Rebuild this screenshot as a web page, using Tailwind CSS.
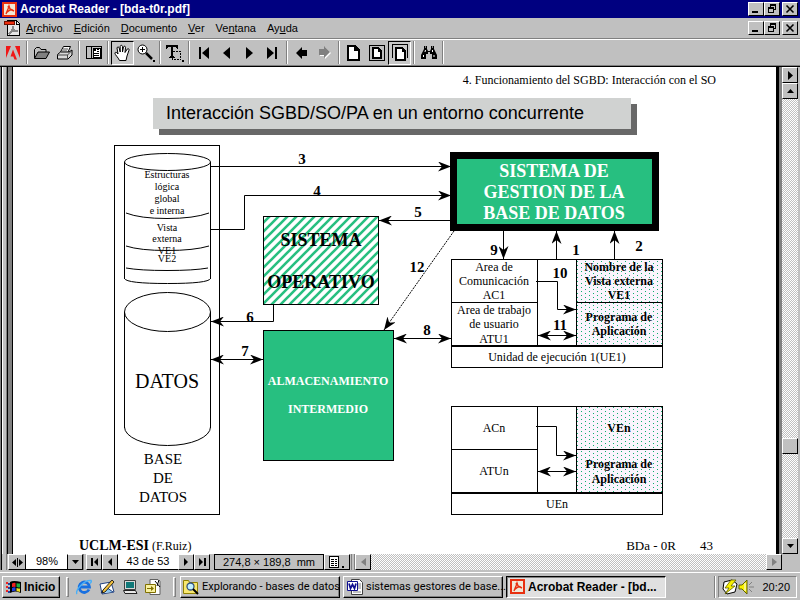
<!DOCTYPE html>
<html lang="es">
<head>
<meta charset="utf-8">
<title>Acrobat Reader - [bda-t0r.pdf]</title>
<script src="https://cdn.jsdelivr.net/npm/@tailwindcss/browser@4"></script>
</head>
<body class="flex h-screen flex-col overflow-hidden bg-[#c0c0c0] font-['Liberation_Sans',Arial,sans-serif] text-[11px] leading-4 text-black">

<!-- Title bar -->
<header class="flex h-[18px] shrink-0 items-center bg-[#000080] pr-[2px] pl-[2px] text-white">
  <svg class="mr-[3px] size-[15px]" viewBox="0 0 15 15"><rect width="15" height="15" fill="#fff"/><rect x="1" y="1" width="13" height="13" fill="#f0e8d8" stroke="#e83010" stroke-width="2"/><path d="M4 12 6 7 7 4 8 7 12 9M4 11 8 8 11 8M6 4 7 6" fill="none" stroke="#e83010" stroke-width="1.4"/></svg>
  <h1 class="flex-1 text-[12px] font-bold whitespace-nowrap">Acrobat Reader - [bda-t0r.pdf]</h1>
  <div class="flex">
    <button aria-label="Minimizar" class="flex h-[14px] w-4 border border-t-white border-r-black border-b-black border-l-white bg-[#c0c0c0]"><svg class="size-full" viewBox="0 0 14 12" shape-rendering="crispEdges"><path d="M3 8h6v2H3z"/></svg></button>
    <button aria-label="Restaurar" class="mr-[2px] flex h-[14px] w-4 border border-t-white border-r-black border-b-black border-l-white bg-[#c0c0c0]"><svg class="size-full" viewBox="0 0 14 12" shape-rendering="crispEdges"><path d="M5 1h6v6H9V6h1V3H6v1H5zM3 4h6v6H3zM4 6v3h4V6z" fill-rule="evenodd"/></svg></button>
    <button aria-label="Cerrar" class="flex h-[14px] w-4 border border-t-white border-r-black border-b-black border-l-white bg-[#c0c0c0]"><svg class="size-full" viewBox="0 0 14 12"><path d="M3.5 2.5l7 7m0-7l-7 7" stroke="#000" stroke-width="1.6"/></svg></button>
  </div>
</header>

<!-- Menu bar -->
<nav class="flex h-[21px] shrink-0 items-center border-b border-[#808080] pr-[2px] pl-1">
  <svg class="mr-[6px] size-4" viewBox="0 0 16 16" shape-rendering="crispEdges"><path d="M3 .5h9.500l3 3v12H3z" fill="#e8e8e8" stroke="#000"/><path d="M12 1v3h3" fill="none" stroke="#000"/><path d="M5 14l3-4 1-4 1 4 4 1-5 0z" fill="none" stroke="#888" stroke-width="1.500"/><path d="M.5 1.500h10v3H.5z" fill="#f03010" stroke="#701000"/></svg>
  <div class="flex flex-1 gap-[11px]">
    <button><u>A</u>rchivo</button><button><u>E</u>dición</button><button><u>D</u>ocumento</button><button><u>V</u>er</button><button>Ve<u>n</u>tana</button><button>Ay<u>u</u>da</button>
  </div>
  <div class="flex">
    <button aria-label="Minimizar documento" class="flex h-[14px] w-4 border border-t-white border-r-black border-b-black border-l-white"><svg class="size-full" viewBox="0 0 14 12" shape-rendering="crispEdges"><path d="M3 8h6v2H3z"/></svg></button>
    <button aria-label="Restaurar documento" class="mr-[2px] flex h-[14px] w-4 border border-t-white border-r-black border-b-black border-l-white"><svg class="size-full" viewBox="0 0 14 12" shape-rendering="crispEdges"><path d="M5 1h6v6H9V6h1V3H6v1H5zM3 4h6v6H3zM4 6v3h4V6z" fill-rule="evenodd"/></svg></button>
    <button aria-label="Cerrar documento" class="flex h-[14px] w-4 border border-t-white border-r-black border-b-black border-l-white"><svg class="size-full" viewBox="0 0 14 12"><path d="M3.5 2.5l7 7m0-7l-7 7" stroke="#000" stroke-width="1.6"/></svg></button>
  </div>
</nav>

<!-- Toolbar -->
<div role="toolbar" aria-label="Herramientas" class="flex h-[27px] shrink-0 items-center border-t border-b border-t-white border-b-[#808080] pl-px">
  <button aria-label="Adobe" class="grid h-6 w-[23px] place-items-center"><svg class="size-4" viewBox="0 0 16 16"><path d="M1 1h5L1 13zM10 1h5v12zM8 4.500l4 10h-2.500l-1.200-3H5.500z" fill="#f01818"/></svg></button>
  <span class="mx-[2px] h-[23px] w-[2px] border-l border-[#808080] bg-white"></span>
  <button aria-label="Abrir" class="grid h-6 w-[23px] place-items-center"><svg class="h-4 w-[18px]" viewBox="0 0 18 16"><path d="M1.500 13V4.500l2-2h3l1.500 2h5V7" fill="#c0c0c0" stroke="#000"/><path d="M1.500 13.500 5 7h11.500L13 13.500z" fill="#808080" stroke="#000"/></svg></button>
  <button aria-label="Imprimir" class="grid h-6 w-[23px] place-items-center"><svg class="h-4 w-[18px]" viewBox="0 0 18 16"><path d="M4.500 7 7.500 1.500h7L12 7" fill="#fff" stroke="#000"/><path d="M1.500 9.500 4.500 7H13l3-2v5l-4 4H1.500z" fill="#d8d8d8" stroke="#000"/><path d="M1.500 10h10l4-4M11.500 10v4M7 4h5M6 6h5" fill="none" stroke="#444"/></svg></button>
  <span class="mx-[2px] h-[23px] w-[2px] border-l border-[#808080] bg-white"></span>
  <button aria-label="Panel de navegación" class="grid h-6 w-[23px] place-items-center"><svg class="size-4" viewBox="0 0 16 16" shape-rendering="crispEdges"><path d="M.5 1.500h15v12H.5z" fill="#c0c0c0" stroke="#000"/><path d="M5 2h1v11H5z"/><path d="M7 3h7v9H7z" fill="#fff" stroke="#000"/><path d="M8 4h2v2H8zM11 4h2v1h-2zM11 6h2v1h-2zM8 8h5v1H8zM8 10h5v1H8z"/></svg></button>
  <span class="mx-[2px] h-[23px] w-[2px] border-l border-[#808080] bg-white"></span>
  <button aria-label="Mano" aria-pressed="true" class="grid h-6 w-[23px] place-items-center border border-t-black border-r-white border-b-white border-l-black bg-[#c8c8c8]"><svg class="h-[18px] w-[17px]" viewBox="0 0 17 18"><path d="M5.500 16.500C4 13 1 11 .8 9c.8-1.500 2.200-.5 3.200 1L3 4c.3-1.500 1.800-1.500 2.200 0l1 4V2.300c.3-1.300 2-1.300 2.300 0V8l1-5c.5-1.300 2-.9 2 .3L11 8.500 13.300 5c1-.9 2 0 1.700 1.200L13 12l-1 4.500z" fill="#fff" stroke="#000"/></svg></button>
  <button aria-label="Zoom" class="grid h-6 w-[23px] place-items-center"><svg class="size-[18px]" viewBox="0 0 18 18"><circle cx="5.500" cy="5.500" r="4.500" fill="#fff" stroke="#000"/><path d="M5.500 3v5M3 5.500h5" stroke="#000"/><path d="m9 9 6 6" stroke="#000" stroke-width="2.500"/><path d="M16 16h2v2h-2z"/></svg></button>
  <span class="mx-[2px] h-[23px] w-[2px] border-l border-[#808080] bg-white"></span>
  <button aria-label="Seleccionar texto" class="grid h-6 w-[23px] place-items-center"><svg class="h-[18px] w-[19px]" viewBox="0 0 19 18" shape-rendering="crispEdges"><path d="M1 1h12v4h-1L11 2.500H8V12l2 1v1H4v-1l2-1V2.500H3L2 5H1z"/><path d="M7.500 7.500h8v8h-8z" fill="none" stroke="#000" stroke-dasharray="2 1"/><path d="M17 16h2v2h-2z"/></svg></button>
  <span class="mx-[2px] h-[23px] w-[2px] border-l border-[#808080] bg-white"></span>
  <button aria-label="Primera página" class="grid h-6 w-[23px] place-items-center"><svg class="h-3 w-[11px]" viewBox="0 0 11 12"><path d="M1 0h2v12H1zM11 0v12L4 6z"/></svg></button>
  <button aria-label="Página anterior" class="grid h-6 w-[23px] place-items-center"><svg class="h-3 w-[7px]" viewBox="0 0 7 12"><path d="M7 0v12L0 6z"/></svg></button>
  <button aria-label="Página siguiente" class="grid h-6 w-[23px] place-items-center"><svg class="h-3 w-[7px]" viewBox="0 0 7 12"><path d="M0 0v12l7-6z"/></svg></button>
  <button aria-label="Última página" class="grid h-6 w-[23px] place-items-center"><svg class="h-3 w-[11px]" viewBox="0 0 11 12"><path d="M8 0h2v12H8zM0 0v12l7-6z"/></svg></button>
  <span class="mx-[2px] h-[23px] w-[2px] border-l border-[#808080] bg-white"></span>
  <button aria-label="Vista anterior" class="grid h-6 w-[23px] place-items-center"><svg class="h-3 w-[11px]" viewBox="0 0 11 12"><path d="M0 6 6 0v3h5v6H6v3z"/></svg></button>
  <button aria-label="Vista siguiente" disabled class="grid h-6 w-[23px] place-items-center"><svg class="h-[13px] w-3" viewBox="0 0 12 13"><path d="M12 7 6 13v-3H1V4h5V1z" fill="#fff"/><path d="M11 6 5 0v3H0v6h5v3z" fill="#808080"/></svg></button>
  <span class="mx-[2px] h-[23px] w-[2px] border-l border-[#808080] bg-white"></span>
  <button aria-label="Tamaño real" class="grid h-6 w-[23px] place-items-center"><svg class="h-4 w-[13px]" viewBox="0 0 13 16" shape-rendering="crispEdges"><path d="M1 1h7l4 4v10H1z" fill="#fff" stroke="#000" stroke-width="2"/><path d="M8 1v4h4" fill="none" stroke="#000" stroke-width="1.500"/></svg></button>
  <button aria-label="Ajustar a ventana" class="grid h-6 w-[23px] place-items-center"><svg class="size-4" viewBox="0 0 16 16" shape-rendering="crispEdges"><path d="M.5.5h15v15H.5z" fill="none" stroke="#000"/><path d="M4 3h5l3 3v7H4z" fill="#fff" stroke="#000" stroke-width="2"/><path d="M9 3v3h3" fill="none" stroke="#000"/></svg></button>
  <button aria-label="Ajustar al ancho" aria-pressed="true" class="grid h-6 w-[23px] place-items-center border border-t-black border-r-white border-b-white border-l-black bg-[#c8c8c8]"><svg class="h-[17px] w-4" viewBox="0 0 16 17" shape-rendering="crispEdges"><path d="M.5 14V.5h15V14" fill="none" stroke="#000"/><path d="M4 4h6l3 3v9H4z" fill="#fff" stroke="#000" stroke-width="2"/><path d="M10 4v3h3" fill="none" stroke="#000"/></svg></button>
  <span class="mx-[2px] h-[23px] w-[2px] border-l border-[#808080] bg-white"></span>
  <button aria-label="Buscar" class="grid h-6 w-[23px] place-items-center"><svg class="h-[14px] w-4" viewBox="0 0 16 14"><path d="M3 0h3v3l1 2h2l1-2V0h3v3l3 6v4h-5V8H9V6H7v2H5v5H0V9l3-6z"/><path d="M2.500 9v2M4.500 4 4 6M11.500 4v2M13 9v2M4 1h1M11 1h1" stroke="#fff"/></svg></button>
  <span class="mx-[2px] h-[23px] w-[2px] border-l border-[#808080] bg-white"></span>
</div>

<!-- Document window -->
<main class="flex min-h-0 flex-1 border-t border-black pr-[2px]">
  <div class="flex w-[13px] shrink-0 border-l border-[#808080]">
    <div class="w-[6px] border-r border-l border-r-[#808080] border-l-black"><div class="h-full border-l border-white"></div></div>
    <div class="flex-1 border-x border-black bg-[#808080]"></div>
  </div>

  <article class="min-w-0 flex-1 overflow-hidden bg-white pt-[5px] font-['Liberation_Serif','Times_New_Roman',serif]">
    <p class="pr-[60px] text-right text-[12px]">4. Funcionamiento del SGBD: Interacción con el SO</p>
    <h2 class="mt-[10px] mr-[145px] ml-[140px] h-[31px] bg-[#d0d2d1] pl-[13px] font-['Liberation_Sans',Arial,sans-serif] text-[18px] leading-[30px] whitespace-nowrap shadow-[6px_6px_0_#686868]">Interacción SGBD/SO/PA en un entorno concurrente</h2>

    <svg class="mt-[11px] block h-auto w-full" viewBox="13 140 763 385" role="img" aria-label="Interacción entre SGBD, sistema operativo y programas de aplicación">
      <defs>
        <pattern id="hatch" width="9" height="9" patternUnits="userSpaceOnUse"><rect width="9" height="9" fill="#fff"/><path d="M-2 11 11-2M-2 2 2-2M7 11 11 7" stroke="#27bf80" stroke-width="2.600"/></pattern>
        <pattern id="dots" width="8" height="8" patternUnits="userSpaceOnUse"><rect width="8" height="8" fill="#fbf4fd"/><path d="M1 1h1v1H1zM5 3h1v1H5zM1 5h1v1H1zM5 7h1v1H5z" fill="#10b070" shape-rendering="crispEdges"/></pattern>
        <marker id="arrow" markerUnits="userSpaceOnUse" markerWidth="14" markerHeight="10" refX="13" refY="5" orient="auto-start-reverse"><path d="M13 5 0 0 4 5 0 10z"/></marker>
      </defs>

      <g fill="none" stroke="#000" shape-rendering="crispEdges">
        <path d="M114.500 145.500h105v369h-105z"/>
        <path d="M124.500 162v117M210.500 162v117M124.500 312v116M210.500 312v116"/>
      </g>
      <g fill="none" stroke="#000">
        <ellipse cx="167.500" cy="162" rx="43" ry="8.500"/>
        <path d="M124.500 278.500q2 5 43 5t43-5M126 213q14 5.500 41 5.500t42-5.500M126 246q14 4.500 41 4.500t42-4.500M126 268q14 2.500 41 2.500t41-2.500"/>
        <ellipse cx="167.500" cy="312" rx="43" ry="19.500"/>
        <path d="M124.500 427a43 18.500 0 0 0 86 0"/>
      </g>

      <g stroke="#000" shape-rendering="crispEdges">
        <path d="M263.500 216.500h115v88h-115z" fill="url(#hatch)"/>
        <path d="M263.500 330.500h130v130h-130z" fill="#27bf80"/>
        <path d="M453.500 155.500h202v72h-202z" fill="#27bf80" stroke-width="7"/>
        <path d="M451.500 259.500h211v108h-211zM451.500 406.500h211v108h-211z" fill="#fff"/>
        <path d="M576.500 259.500h86v86h-86zM576.500 406.500h86v86h-86z" fill="url(#dots)"/>
        <path d="M537.500 259v87M451 302.500h86M576 302.500h86M537.500 406v87M451 449.500h86M576 449.500h86" fill="none"/>
        <path d="M451 346h212M451 493h212" fill="none" stroke-width="2"/>
      </g>

      <g fill="none" stroke="#000">
        <g marker-end="url(#arrow)">
          <path d="M211 166.500h240"/>
          <path d="M211 229.500h33.500v-34H451"/>
          <path d="M450 220.500h-71"/>
          <path d="M273.500 305v16.500H211"/>
          <path d="M454 231 384 330" stroke-dasharray="2 1"/>
          <path d="M503.500 231v28"/>
          <path d="M556.500 259v-28"/>
          <path d="M614.500 259v-28"/>
          <path d="M536 281.500h21.500v28H576"/>
          <path d="M536 426.500h20.500v29H576"/>
        </g>
        <g marker-start="url(#arrow)" marker-end="url(#arrow)">
          <path d="M211 359.500h52"/>
          <path d="M394 338.500h57"/>
          <path d="M538 335.500h38"/>
          <path d="M538 471.500h38"/>
        </g>
      </g>

      <g text-anchor="middle">
        <g class="text-[10px]">
          <text x="167" y="178">Estructuras</text><text x="167" y="190">lógica</text><text x="167" y="202">global</text><text x="167" y="214">e interna</text>
          <text x="167" y="231">Vista</text><text x="167" y="242">externa</text><text x="167" y="254">VE1</text><text x="167" y="262">VE2</text>
        </g>
        <text class="text-[20px]" x="167" y="388">DATOS</text>
        <g class="text-[15px]"><text x="163" y="464">BASE</text><text x="163" y="483">DE</text><text x="163" y="502">DATOS</text></g>
        <g class="text-[18px] font-bold">
          <text x="321" y="246">SISTEMA</text><text x="321" y="288">OPERATIVO</text>
          <g fill="#fff"><text x="554" y="177">SISTEMA DE</text><text x="554" y="198">GESTION DE LA</text><text x="554" y="219">BASE DE DATOS</text></g>
        </g>
        <g class="text-[12px] font-bold" fill="#fff"><text x="328" y="385">ALMACENAMIENTO</text><text x="328" y="413">INTERMEDIO</text></g>
        <g class="text-[12px]">
          <text x="494" y="271">Area de</text><text x="494" y="285">Comunicación</text><text x="494" y="299">AC1</text>
          <text x="494" y="314">Area de trabajo</text><text x="494" y="328">de usuario</text><text x="494" y="343">ATU1</text>
          <text x="557" y="361">Unidad de ejecución 1(UE1)</text>
          <text x="494" y="432">ACn</text><text x="494" y="475">ATUn</text><text x="557" y="508">UEn</text>
        </g>
        <g class="text-[12px] font-bold">
          <text x="619" y="271">Nombre de la</text><text x="619" y="285">Vista externa</text><text x="619" y="299">VE1</text>
          <text x="619" y="321">Programa de</text><text x="619" y="335">Aplicación</text>
          <text x="619" y="432">VEn</text><text x="619" y="468">Programa de</text><text x="619" y="483">Aplicación</text>
        </g>
        <g class="text-[15px] font-bold">
          <text x="302" y="164">3</text><text x="317" y="196">4</text><text x="418" y="217">5</text><text x="250" y="322">6</text><text x="245" y="356">7</text><text x="427" y="335">8</text>
          <text x="494" y="255">9</text><text x="576" y="255">1</text><text x="639" y="251">2</text><text x="560" y="278">10</text><text x="560" y="330">11</text><text x="417" y="272">12</text>
        </g>
      </g>
    </svg>

    <footer class="mt-[13px] flex items-baseline pr-[63px] pl-[66px] text-[13px]">
      <p class="flex-1 text-[12px]"><b class="text-[14px]">UCLM-ESI</b> (F.Ruiz)</p>
      <p class="mr-6">BDa - 0R</p><p>43</p>
    </footer>
  </article>

  <div class="w-[6px] shrink-0 border-l-3 border-black bg-[#808080]"></div>

  <div class="flex w-4 shrink-0 flex-col bg-[repeating-conic-gradient(#fff_0_25%,#c0c0c0_0_50%)] bg-size-[2px_2px]">
    <button aria-label="Barra de comandos" class="grid h-4 place-items-center border border-t-white border-r-black border-b-black border-l-white bg-[#c0c0c0]"><svg class="h-[9px] w-[5px]" viewBox="0 0 5 9"><path d="M0 0v9l5-4.500z"/></svg></button>
    <button aria-label="Subir" class="grid h-4 place-items-center border border-t-white border-r-black border-b-black border-l-white bg-[#c0c0c0]"><svg class="h-1 w-[7px]" viewBox="0 0 7 4"><path d="M0 4h7L3.500 0z"/></svg></button>
    <div class="flex-[339]"></div>
    <div class="h-4 border border-t-white border-r-black border-b-black border-l-white bg-[#c0c0c0]"></div>
    <div class="flex-[84]"></div>
    <button aria-label="Bajar" class="grid h-4 place-items-center border border-t-white border-r-black border-b-black border-l-white bg-[#c0c0c0]"><svg class="h-1 w-[7px]" viewBox="0 0 7 4"><path d="M0 0h7L3.500 4z"/></svg></button>
  </div>
</main>

<!-- Status bar -->
<div class="flex h-4 shrink-0 pr-[2px]">
  <div class="mr-px w-[7px] shrink-0 border-x border-l-[#808080] border-r-[#808080]"><div class="h-full border-l border-black"></div></div>
  <button aria-label="Divisor" class="grid w-[18px] place-items-center border border-t-white border-r-black border-b-black border-l-white"><svg class="h-[9px] w-[11px]" viewBox="0 0 11 9"><path d="M4 1v7L0 4.500zM7 1v7l4-3.500zM5 0h1v9H5z"/></svg></button>
  <label class="relative flex w-[57px] border-b border-black bg-white">
    <select aria-label="Nivel de zoom" class="w-full appearance-none pl-[10px] leading-[15px]"><option>98%</option></select>
    <span class="pointer-events-none absolute inset-y-0 right-0 grid w-4 place-items-center border border-t-white border-r-black border-b-0 border-l-black bg-[#c0c0c0]"><svg class="h-1 w-[7px]" viewBox="0 0 7 4"><path d="M0 0h7L3.500 4z"/></svg></span>
  </label>
  <span class="w-[3px] border-l border-[#808080]"></span>
  <button aria-label="Primera" class="grid w-4 place-items-center border border-t-white border-r-black border-b-black border-l-white"><svg class="h-2 w-[7px]" viewBox="0 0 7 8"><path d="M0 0h2v8H0zM7 0v8L3 4z"/></svg></button>
  <button aria-label="Anterior" class="grid w-4 place-items-center border border-t-white border-r-black border-b-black border-l-white"><svg class="h-2 w-1" viewBox="0 0 4 8"><path d="M4 0v8L0 4z"/></svg></button>
  <input aria-label="Página" value="43 de 53" class="w-[60px] border-b border-black bg-white px-0 text-center leading-[15px]">
  <button aria-label="Siguiente" class="grid w-4 place-items-center border border-t-white border-r-black border-b-black border-l-white"><svg class="h-2 w-1" viewBox="0 0 4 8"><path d="M0 0v8l4-4z"/></svg></button>
  <button aria-label="Última" class="grid w-4 place-items-center border border-t-white border-r-black border-b-black border-l-white"><svg class="h-2 w-[7px]" viewBox="0 0 7 8"><path d="M5 0h2v8H5zM0 0v8l4-4z"/></svg></button>
  <span class="ml-[4px] w-[110px] border border-black text-center leading-[14px] whitespace-nowrap">274,8 × 189,8 &nbsp;mm</span>
  <button aria-label="Diseño de página" class="grid w-[26px] place-items-center border border-t-white border-r-black border-b-black border-l-white"><svg class="h-3 w-4" viewBox="0 0 16 12" shape-rendering="crispEdges"><path d="M.5.5h9v11h-9z" fill="#fff" stroke="#000"/><path d="M2 3h3v1H2zM6 3h2v1H6zM2 5h3v1H2zM6 5h2v1H6zM2 7h3v1H2zM6 7h2v1H6zM2 9h3v1H2zM6 9h2v1H6zM13 10h2v2h-2z"/></svg></button>
  <span class="ml-px w-[4px] border-x border-[#808080]"></span>
  <div class="flex flex-1 justify-between bg-[repeating-conic-gradient(#fff_0_25%,#c0c0c0_0_50%)] bg-size-[2px_2px]">
    <button aria-label="Desplazar a la izquierda" class="grid w-4 place-items-center border border-t-white border-r-black border-b-black border-l-white bg-[#c0c0c0]"><svg class="h-2 w-[5px]" viewBox="0 0 5 8"><path d="M5 0v8L0 4z" fill="#808080"/></svg></button>
    <button aria-label="Desplazar a la derecha" class="grid w-4 place-items-center border border-t-white border-r-black border-b-black border-l-white bg-[#c0c0c0]"><svg class="h-2 w-[5px]" viewBox="0 0 5 8"><path d="M0 0v8l5-4z" fill="#808080"/></svg></button>
  </div>
  <span class="w-4"></span>
</div>

<!-- Taskbar -->
<div class="mt-[2px] flex h-[28px] shrink-0 items-center border-t border-white pr-[3px] pl-[2px]">
  <button class="flex h-[22px] w-[58px] items-center gap-[2px] border border-t-white border-r-black border-b-black border-l-white pl-[3px] text-[12px] font-bold shadow-[inset_-1px_-1px_0_#808080]">
    <svg class="size-4 shrink-0" viewBox="0 0 16 16"><path d="M4 3q3-2 11 0v11q-6-3-11 0z"/><path d="M6 4.500q2-1 3.500-.5v4Q8 7.500 6 8z" fill="#f02020"/><path d="M10.500 4.200q2 .3 3.500.3v4q-1.500 0-3.500-.5z" fill="#20b040"/><path d="M6 9q2-1 3.500-.5v3.500Q8 11.500 6 12.500z" fill="#2040e0"/><path d="M10.500 9q2 .5 3.500.5v3.500q-1.500-.5-3.500-.8z" fill="#f0e020"/><path d="M0 4h2M0 8h2M0 12h2" stroke="#f02020" stroke-width="2"/><path d="M2 5h2M2 9h2M2 13h2" stroke="#2040a0" stroke-width="2"/></svg>Inicio
  </button>
  <span class="mr-[7px] ml-[6px] h-5 w-[3px] border border-t-white border-r-[#808080] border-b-[#808080] border-l-white"></span>
  <div class="flex gap-[7px]">
    <button aria-label="Internet Explorer"><svg class="block size-4" viewBox="0 0 16 16"><path d="M13 10.500A5.200 5.200 0 1 1 13.500 8H4" fill="none" stroke="#1870e0" stroke-width="2.800"/><path d="M1 15C-1 12 7 1 15 1.500q1 1-1 3" fill="none" stroke="#48b0f8" stroke-width="1.400"/></svg></button>
    <button aria-label="Outlook Express"><svg class="block size-4" viewBox="0 0 16 16"><path d="m1 5 11-2 3 10-12 2z" fill="#fff" stroke="#204080"/><path d="m2 14 5-6 7 5" fill="#90c8f0" stroke="#204080"/><path d="m4 11 9-10 2 2-9 10-3 1z" fill="#f0c040" stroke="#000" stroke-width=".8"/></svg></button>
    <button aria-label="Mostrar escritorio"><svg class="block size-4" viewBox="0 0 16 16"><path d="M2.500 1.500h11v9h-11z" fill="#d8d8d8" stroke="#404040"/><path d="M4 3h8v6H4z" fill="#107878"/><path d="M1.500 11.500h12l1.500 3H3z" fill="#e8e8e8" stroke="#202020"/></svg></button>
    <button aria-label="Ver canales"><svg class="block size-4" viewBox="0 0 16 16"><path d="M5 .5h8l2 2v13H5z" fill="#fff" stroke="#606060"/><path d="M.5 5.500h10v8H.5z" fill="#f8f0a0" stroke="#807000"/><path d="M2 9h4V7l3 2.500L6 12v-2H2z" fill="#807000"/><path d="m10 2 5 6M14 1l-2 6" stroke="#000"/></svg></button>
  </div>
  <span class="mr-1 ml-[12px] h-5 w-[3px] border border-t-white border-r-[#808080] border-b-[#808080] border-l-white"></span>
  <div class="flex flex-1 gap-[3px]">
    <button class="flex h-[22px] w-40 items-center gap-[3px] border border-t-white border-r-black border-b-black border-l-white pl-[2px] font-[Roboto,'Liberation_Sans',sans-serif] whitespace-nowrap shadow-[inset_-1px_-1px_0_#808080]"><svg class="size-4 shrink-0" viewBox="0 0 16 16"><path d="M.5 14.500v-13h5l1 2h8v11z" fill="#f8e870" stroke="#908000"/><circle cx="7.500" cy="7.500" r="3.500" fill="#c0f0ff" stroke="#305080" stroke-width="1.300"/><path d="m10 10 5 5" stroke="#000" stroke-width="2"/></svg>Explorando - bases de datos</button>
    <button class="flex h-[22px] w-40 items-center gap-[3px] border border-t-white border-r-black border-b-black border-l-white pl-[3px] font-[Roboto,'Liberation_Sans',sans-serif] whitespace-nowrap shadow-[inset_-1px_-1px_0_#808080]"><svg class="size-4 shrink-0" viewBox="0 0 16 16"><path d="M4.500.5h8l3 3v12h-11z" fill="#fff" stroke="#404040"/><path d="M11 5h3M11 7h3M6 13h8M11 9h3" stroke="#808080"/><path d="M.5 2.500h10v9H.5z" fill="#fff" stroke="#101090"/><path d="m2 4.500 1.500 5 2-4 2 4 1.500-5" fill="none" stroke="#101090" stroke-width="1.700"/></svg>sistemas gestores de base...</button>
    <button aria-pressed="true" class="flex h-[22px] w-40 items-center gap-[3px] border border-t-black border-r-white border-b-white border-l-black bg-[#e0e0e0] pl-[3px] text-[12px] font-bold whitespace-nowrap shadow-[inset_1px_1px_0_#808080]"><svg class="size-[15px] shrink-0" viewBox="0 0 15 15"><rect x="1" y="1" width="13" height="13" fill="#f0e8d8" stroke="#e83010" stroke-width="2"/><path d="M4 12 6 7 7 4 8 7 12 9M4 11 8 8 11 8M6 4 7 6" fill="none" stroke="#e83010" stroke-width="1.400"/></svg>Acrobat Reader - [bd...</button>
  </div>
  <span class="mr-[2px] h-[22px] w-[2px] border-l border-[#808080] bg-white"></span>
  <div class="flex h-[22px] w-[79px] items-center border border-t-[#808080] border-r-white border-b-white border-l-[#808080] pl-[3px]">
    <svg class="size-4" viewBox="0 0 16 16"><path d="M2 3 10 1l5 4-2 8-8 2-4-5z" fill="#fff" stroke="#000"/><path d="m9 1-6 8h4l-4 6 10-8H9l5-6z" fill="#f8f000" stroke="#606000" stroke-width=".8"/></svg>
    <svg class="size-4" viewBox="0 0 16 16"><path d="M1 6h3l5-5v14l-5-5H1z" fill="#f8f000" stroke="#606000"/><path d="M7 4v8" stroke="#fff"/><path d="M11 6l3-3M11 8h5M11 10l3 3" stroke="#808080"/></svg>
    <time class="ml-auto pr-[6px] text-[11px]">20:20</time>
  </div>
</div>
</body>
</html>
